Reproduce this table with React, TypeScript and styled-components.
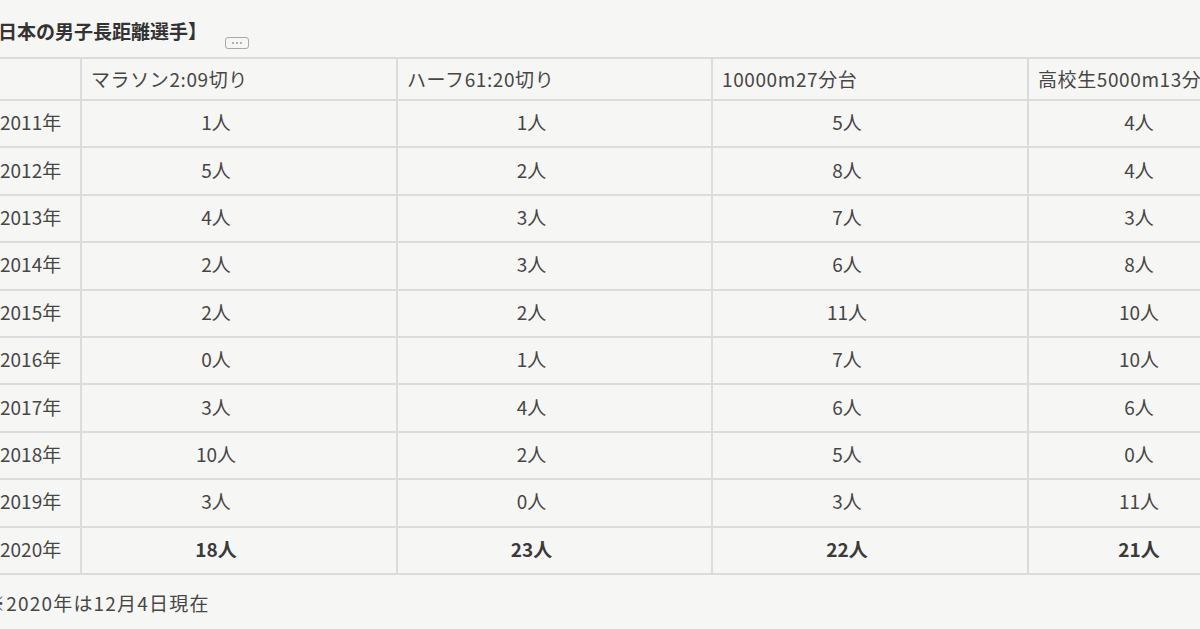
import styled, { createGlobalStyle } from 'styled-components';

const GlobalStyle = createGlobalStyle`
  html, body {
    margin: 0;
    padding: 0;
    background: #f6f6f4;
    overflow: hidden;
  }
  body {
    font-family: "Noto Sans CJK JP", "Noto Sans", sans-serif;
    color: #464646;
  }
`;

const Page = styled.div`
  position: relative;
  margin-left: -10px;
  padding-top: 19px;
  width: 1320px;
`;

const Title = styled.h2`
  margin: 0 0 0 -11px;
  font-size: 19px;
  line-height: 24px;
  font-weight: 700;
  color: #333;
`;

const Handle = styled.div`
  position: absolute;
  left: 235px;
  top: 37px;
  width: 22px;
  height: 10px;
  border: 1.5px solid #a9a9a9;
  border-radius: 3px;
  display: flex;
  align-items: center;
  justify-content: center;
  gap: 2px;
  span {
    width: 2px;
    height: 2px;
    border-radius: 50%;
    background: #9a9a9a;
  }
`;

const Table = styled.table`
  margin-top: 14px;
  border-collapse: collapse;
  table-layout: fixed;
  width: 1305px;
  font-size: 19px;
`;

const Col = styled.col<{ $w: number }>`
  width: ${({ $w }) => $w}px;
`;

const HeadCell = styled.th`
  height: 38px;
  padding: 0 0 2px 9px;
  border: 2px solid #dcdcdc;
  text-align: left;
  font-weight: 400;
  letter-spacing: 0.6px;
  vertical-align: middle;
  white-space: nowrap;
  overflow: hidden;
`;

const YearCell = styled.td`
  height: 41.4px;
  padding: 0 0 4px 8px;
  border: 2px solid #dcdcdc;
  text-align: left;
  vertical-align: middle;
  white-space: nowrap;
`;

const Cell = styled.td<{ $bold?: boolean }>`
  height: 41.4px;
  padding: 0 46px 4px 0;
  border: 2px solid #dcdcdc;
  text-align: center;
  vertical-align: middle;
  font-weight: ${({ $bold }) => ($bold ? 700 : 400)};
  color: ${({ $bold }) => ($bold ? '#3a3a3a' : '#464646')};
`;

const Note = styled.p`
  margin: 16px 0 0 -4px;
  font-size: 19px;
  line-height: 24px;
  letter-spacing: 1.2px;
`;

const widths = [90, 316, 315, 316, 268];

const headers = ['マラソン2:09切り', 'ハーフ61:20切り', '10000m27分台', '高校生5000m13分台'];

const rows: [string, number, number, number, number][] = [
  ['2011年', 1, 1, 5, 4],
  ['2012年', 5, 2, 8, 4],
  ['2013年', 4, 3, 7, 3],
  ['2014年', 2, 3, 6, 8],
  ['2015年', 2, 2, 11, 10],
  ['2016年', 0, 1, 7, 10],
  ['2017年', 3, 4, 6, 6],
  ['2018年', 10, 2, 5, 0],
  ['2019年', 3, 0, 3, 11],
  ['2020年', 18, 23, 22, 21],
];

const App = () => {
  return (
    <>
      <GlobalStyle />
      <Page>
        <Title>【日本の男子長距離選手】</Title>
        <Handle>
          <span />
          <span />
          <span />
        </Handle>
        <Table>
          <colgroup>
            {widths.map((w, i) => (
              <Col key={i} $w={w} />
            ))}
          </colgroup>
          <thead>
            <tr>
              <HeadCell />
              {headers.map((h) => (
                <HeadCell key={h}>{h}</HeadCell>
              ))}
            </tr>
          </thead>
          <tbody>
            {rows.map(([year, ...vals]) => {
              const last = year === '2020年';
              return (
                <tr key={year}>
                  <YearCell>{year}</YearCell>
                  {vals.map((v, i) => (
                    <Cell key={i} $bold={last}>
                      {v}人
                    </Cell>
                  ))}
                </tr>
              );
            })}
          </tbody>
        </Table>
        <Note>※2020年は12月4日現在</Note>
      </Page>
    </>
  );
};

export default App;
